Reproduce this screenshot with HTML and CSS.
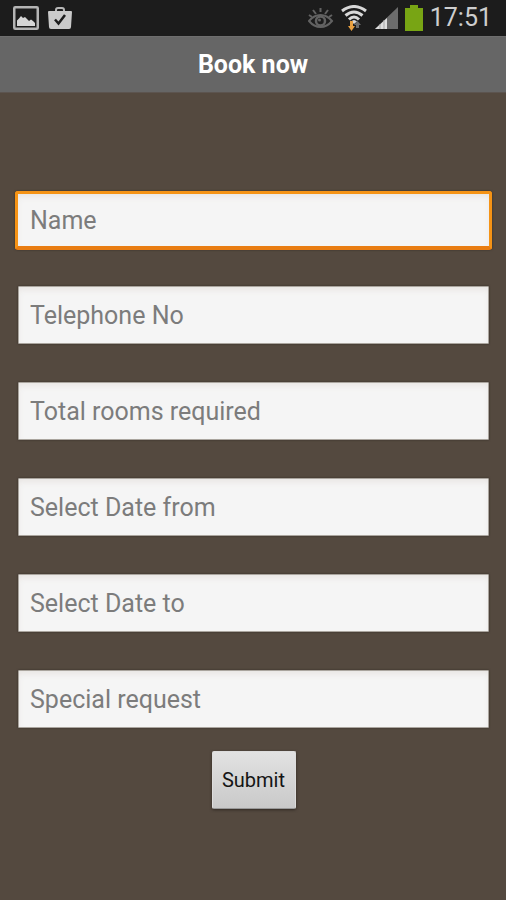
FILE: index.html
```html
<!DOCTYPE html>
<html lang="en">
<head>
<meta charset="utf-8">
<meta name="viewport" content="width=device-width, initial-scale=1">
<title>Book now</title>
<link rel="stylesheet" href="styles.css">
</head>
<body>
<div class="status-bar">
  <div class="status-group">
    <svg class="icon" width="26" height="24" viewBox="0 0 26 24" aria-hidden="true">
      <rect x="1.250" y="1.250" width="23.500" height="21.500" rx="1" fill="none" stroke="#b4b4b4" stroke-width="2.500"/>
      <path d="M4 20V14.500L6 12.500L8 10L10 12L12 11L14 13L16 15L18 13.500L20 15L22 17V20Z" fill="#d6d6d6"/>
    </svg>
    <svg class="icon" width="24" height="24" viewBox="0 0 24 24" aria-hidden="true">
      <path d="M8 6V4Q8 2 10 2H14Q16 2 16 4V6" fill="none" stroke="#b8b8b8" stroke-width="2"/>
      <path d="M0 6Q0 5 1 5H23Q24 5 24 6L23 21Q23 23 21 23H3Q1 23 1 21Z" fill="#cacaca"/>
      <path d="M7 13.500L10.500 17.500L17 9" fill="none" stroke="#1c1c1c" stroke-width="2.500"/>
    </svg>
  </div>
  <div class="status-group status-group-end">
    <svg class="icon" width="26" height="24" viewBox="0 0 26 24" aria-hidden="true">
      <g fill="none" stroke="#626262" stroke-width="2">
        <path d="M1 15Q6 9 12.500 9T24 15Q19 21 12.500 21T1 15Z"/>
        <path d="M12.500 2V6M5 4L8 8M20 4L17 8M1 9L4 11M24 9L21 11"/>
        <circle cx="12.500" cy="15" r="4.500" stroke-width="2.500"/>
      </g>
      <circle cx="11.500" cy="14" r="1.500" fill="#626262"/>
    </svg>
    <svg class="icon" width="26" height="26" viewBox="0 0 26 26" aria-hidden="true">
      <g fill="none" stroke="#d8d8d8" stroke-width="3">
        <path d="M1 6Q13 -3 25 6"/>
        <path d="M4.500 10.500Q13 3.500 21.500 10.500"/>
        <path d="M8 14.500Q13 9.500 18 14.500"/>
      </g>
      <path d="M10 16.500Q13 13.500 16 16.500L13 19Z" fill="#d8d8d8"/>
      <path d="M9 16H12V21H14L10.500 26L7 21H9Z" fill="#e8a040"/>
      <path d="M15 23V20H13L16.500 16L20 20H18V23Z" fill="#6c6c6c"/>
    </svg>
    <svg class="icon" width="24" height="22" viewBox="0 0 24 22" aria-hidden="true">
      <path d="M1 22L24 0V22Z" fill="#6c6c6c"/>
      <path d="M1 22L13 11V22Z" fill="#dedede"/>
      <path d="M6 17V22M10 13V22" stroke="#a6a6a6" stroke-width="1"/>
    </svg>
    <svg class="icon" width="18" height="26" viewBox="0 0 18 26" aria-hidden="true">
      <path d="M5 0H13V3H18V26H0V3H5Z" fill="#78a514"/>
    </svg>
    <span class="clock">17:51</span>
  </div>
</div>
<header class="title-bar"><h1 class="title">Book now</h1></header>
<main>
  <form class="form">
    <input class="field field-active" type="text" aria-label="Name" placeholder="Name">
    <input class="field" type="tel" aria-label="Telephone No" placeholder="Telephone No">
    <input class="field" type="text" aria-label="Total rooms required" placeholder="Total rooms required">
    <input class="field" type="text" aria-label="Select Date from" placeholder="Select Date from">
    <input class="field" type="text" aria-label="Select Date to" placeholder="Select Date to">
    <input class="field" type="text" aria-label="Special request" placeholder="Special request">
    <button class="submit" type="button">Submit</button>
  </form>
</main>
</body>
</html>
```
FILE: styles.css
```css
* {
  box-sizing: border-box;
}

body {
  margin: 0;
  min-height: 100vh;
  background: #54493f;
  font-family: Roboto, "Liberation Sans", sans-serif;
}

.status-bar {
  display: flex;
  justify-content: space-between;
  align-items: center;
  height: 36px;
  padding: 0 14px 0 13px;
  background: #1c1c1c;
}

.status-group {
  display: flex;
  align-items: center;
  gap: 9px;
}

.status-group-end {
  gap: 7px;
}

.icon {
  display: block;
  flex: none;
}

.clock {
  color: #cecece;
  font-size: 25px;
  line-height: 36px;
}

.title-bar {
  display: flex;
  align-items: center;
  justify-content: center;
  height: 57px;
  background: #666;
  border-top: 1px solid #6e6e6e;
  border-bottom: 1px solid #5c544f;
}

.title {
  margin: 0;
  color: #fff;
  font-size: 25px;
  line-height: 32px;
  font-weight: 700;
}

.form {
  display: flex;
  flex-direction: column;
  padding: 98px 17px 24px 18px;
}

.field {
  height: 58px;
  margin: 0 0 38px;
  padding: 0 11px;
  border: 1px solid #aaa59e;
  border-radius: 1px;
  outline: none;
  background: #f5f5f5;
  box-shadow: 0 0 2px #302a24, inset 0 4px 7px -2px #e6e2df;
  color: #222;
  font: 25px/32px Roboto, "Liberation Sans", sans-serif;
}

.field::placeholder {
  color: #7c7c7c;
  opacity: 1;
}

.field-active {
  height: 59px;
  margin: 0 -3px 36px;
  padding: 0 12px;
  border: 3px solid #f59315;
  border-bottom: 4px solid #e97d12;
  border-radius: 3px;
}

.field:last-of-type {
  margin-bottom: 23px;
}

.submit {
  align-self: center;
  width: 84px;
  height: 58px;
  padding: 0;
  border: 1px solid #ddd;
  border-bottom-color: #999;
  border-radius: 2px;
  background: linear-gradient(#e2e2e2, #c9c9c9);
  box-shadow: 0 1px 3px #302a24;
  color: #151515;
  font: 20px/24px Roboto, "Liberation Sans", sans-serif;
}
```
